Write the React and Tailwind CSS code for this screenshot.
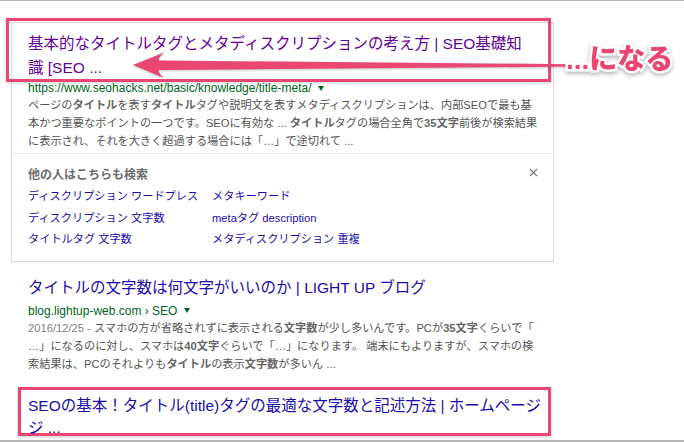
import React from 'react';

const PINK = 'border-[#e94672]';

function Caret() {
  return (
    <span className="ml-[7px] inline-block align-middle border-x-[3.5px] border-t-[5px] border-x-transparent border-t-[#006621]" />
  );
}

function B({ children }) {
  return <b className="font-bold text-[#666]">{children}</b>;
}

function Related() {
  const rows = [
    ['ディスクリプション ワードプレス', 'メタキーワード'],
    ['ディスクリプション 文字数', 'metaタグ description'],
    ['タイトルタグ 文字数', 'メタディスクリプション 重複'],
  ];
  return (
    <div className="pl-[16px] pr-[15px] pt-[10px] pb-[10px]">
      <div className="flex items-start justify-between">
        <div className="text-[12px] font-bold leading-[22px] text-[#6d6d6d]">他の人はこちらも検索</div>
        <svg className="mt-[4px]" width="9" height="9" viewBox="0 0 9 9">
          <path d="M1 1L8 8M8 1L1 8" stroke="#777" strokeWidth="1.1" />
        </svg>
      </div>
      <div className="grid grid-cols-[184px_1fr] text-[11.2px] leading-[21.5px] text-[#1a0dab]">
        {rows.map((r) => (
          <React.Fragment key={r[0]}>
            <span className="whitespace-nowrap">{r[0]}</span>
            <span className="whitespace-nowrap">{r[1]}</span>
          </React.Fragment>
        ))}
      </div>
    </div>
  );
}

export default function App() {
  return (
    <div className="relative h-[442px] w-[684px] overflow-hidden border-t border-b-2 border-t-[#b4b4b4] border-b-[#b4b4b4] bg-white font-['Liberation_Sans','Noto_Sans_CJK_JP',sans-serif]">
      {/* first result card */}
      <div className="ml-[11px] mt-[21px] w-[543px] border border-[#dcdcdc] shadow-[0_1px_1px_rgba(0,0,0,0.05)]">
        <div className="pl-[16px] pt-[9px]">
          <div className="whitespace-nowrap text-[15.5px] leading-[24px] text-[#660099]">
            基本的なタイトルタグとメタディスクリプションの考え方 | SEO基礎知
            <br />
            識 [SEO ...
          </div>
          <div className="flex items-center text-[12px] leading-[16px] text-[#006621]">
            https://www.seohacks.net/basic/knowledge/title-meta/
            <Caret />
          </div>
          <div className="whitespace-nowrap text-[11.2px] leading-[18px] text-[#545454]">
            <div>ページの<B>タイトル</B>を表す<B>タイトル</B>タグや説明文を表すメタディスクリプションは、内部SEOで最も基</div>
            <div>本かつ重要なポイントの一つです。SEOに有効な ... <B>タイトル</B>タグの場合全角で<B>35文字</B>前後が検索結果</div>
            <div>に表示され、それを大きく超過する場合には「…」で途切れて ...</div>
          </div>
        </div>
        <div className="mr-[2px] mt-[3px] h-px bg-[#ebebeb]" />
        <Related />
      </div>

      {/* second result */}
      <div className="ml-[28px] mt-[15px]">
        <div className="whitespace-nowrap text-[15.5px] leading-[22px] text-[#1a0dab]">
          タイトルの文字数は何文字がいいのか | LIGHT UP ブログ
        </div>
        <div className="mt-[4px] flex items-center text-[12px] leading-[16px] text-[#006621]">
          blog.lightup-web.com › SEO
          <Caret />
        </div>
        <div className="whitespace-nowrap text-[11.2px] leading-[18px] text-[#545454]">
          <div><span className="text-[#808080]">2016/12/25 - </span>スマホの方が省略されずに表示される<B>文字数</B>が少し多いんです。PCが<B>35文字</B>くらいで「</div>
          <div>…」になるのに対し、スマホは<B>40文字</B>ぐらいで「…」になります。 端末にもよりますが、スマホの検</div>
          <div>索結果は、PCのそれよりも<B>タイトル</B>の表示<B>文字数</B>が多いん ...</div>
        </div>
      </div>

      {/* third result, highlighted */}
      <div className={`ml-[18px] mt-[14.5px] h-[49px] w-[533px] border-[3px] ${PINK} pl-[7px] pt-[5px] shadow-[0_1px_3px_rgba(0,0,0,0.2)]`}>
        <div className="whitespace-nowrap text-[15.5px] leading-[22px] text-[#1a0dab]">
          SEOの基本！タイトル(title)タグの最適な文字数と記述方法 | ホームページ
          <br />
          ジ ...
        </div>
      </div>

      {/* annotation over first title */}
      <div className={`pointer-events-none absolute left-[6px] top-[17px] h-[64px] w-[545px] border-[3px] ${PINK} shadow-[0_1px_3px_rgba(0,0,0,0.2)]`} />
      <svg className="pointer-events-none absolute left-0 top-[-1px] drop-shadow-[0_1px_1px_rgba(0,0,0,0.25)]" width="684" height="100" viewBox="0 0 684 100">
        <path
          d="M133 65 L164 52.5 Q157 59 159 60.5 L550 64 L569 64.2 L569 66.4 L550 66.8 L159 70 Q157 71.5 164 78 Z"
          fill="#e94672"
        />
      </svg>
      <div className="pointer-events-none absolute left-[566px] top-[42px] whitespace-nowrap text-[28px] font-black leading-[34px] text-[#e94672] [-webkit-text-stroke:5px_white] [paint-order:stroke_fill] drop-shadow-[0_2px_2px_rgba(0,0,0,0.3)]">
        ...になる
      </div>
    </div>
  );
}
